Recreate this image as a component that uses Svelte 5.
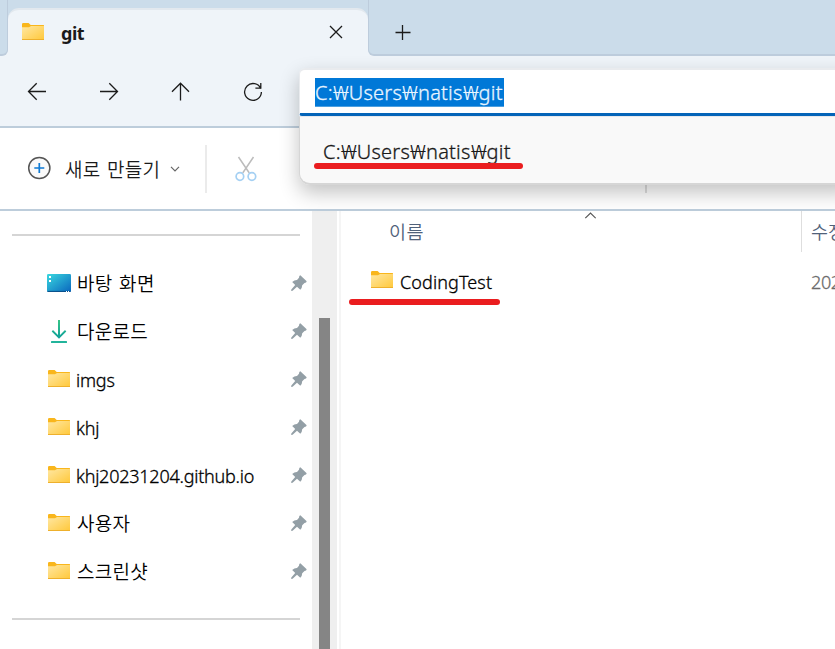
<script>
  const places = [
    { name: '바탕 화면', icon: 'desktop', ko: true },
    { name: '다운로드', icon: 'download', ko: true },
    { name: 'imgs', icon: 'folder' },
    { name: 'khj', icon: 'folder' },
    { name: 'khj20231204.github.io', icon: 'folder' },
    { name: '사용자', icon: 'folder', ko: true },
    { name: '스크린샷', icon: 'folder', ko: true },
  ];
  const segments = ['Users', 'natis', 'git'];
</script>

{#snippet folder()}
  <svg class="folder" width="24" height="20" viewBox="0 0 24 20">
    <defs>
      <linearGradient id="sheet" x1="0" y1="0" x2="1" y2="1">
        <stop offset="0" stop-color="#ffe7a2" />
        <stop offset="1" stop-color="#ffc83a" />
      </linearGradient>
    </defs>
    <path d="M1 2.2Q1 1 2.2 1H7.6L9.7 3H22.5Q23 3 23 3.6V8H1Z" fill="#f9b61c" />
    <path d="M1 5.2H8L10 4H23V17.4Q23 18 22.4 18H1.6Q1 18 1 17.4Z" fill="url(#sheet)" />
    <path d="M1 17.5H23" stroke="#eeb02c" />
  </svg>
{/snippet}

{#snippet path()}
  <span class="path">C:{#each segments as segment}<span class="won">₩</span>{segment}{/each}</span>
{/snippet}

<div class="window">
  <header class="titlebar">
    <div class="edge"></div>
    <div class="tab">
      {@render folder()}
      <span class="title">git</span>
      <svg class="close" width="14" height="14" viewBox="0 0 14 14"><path d="M1 1L13 13M13 1L1 13" /></svg>
    </div>
    <div class="strip">
      <svg width="16" height="16" viewBox="0 0 16 16"><path d="M.5 8.5H15.5M7.5 1V16" /></svg>
    </div>
  </header>

  <nav class="navbar">
    <svg width="20" height="20" viewBox="0 0 20 20"><path d="M19 9.5H1.5M9.7 1.3L1.5 9.5L9.7 17.7" /></svg>
    <svg width="20" height="20" viewBox="0 0 20 20"><path d="M1 9.5H18.5M10.3 1.3L18.5 9.5L10.3 17.7" /></svg>
    <svg width="20" height="20" viewBox="0 0 20 20"><path d="M10.5 18.5V1.5M2 9.7L10.5 1.2L19 9.7" /></svg>
    <svg class="refresh" width="20" height="20" viewBox="0 0 20 20"><path d="M17.8 6.8A8.4 8.4 0 1 0 18.4 10M17.8 1V6.2H12.4" /></svg>
    <div class="address">
      <div class="field"><span class="selected">{@render path()}</span></div>
      <div class="suggestions">
        {@render path()}
        <i class="marker"></i>
      </div>
    </div>
  </nav>

  <div class="toolbar">
    <svg class="plus" width="24" height="24" viewBox="0 0 24 24">
      <circle cx="12.3" cy="12" r="10.6" fill="#fafafa" stroke="#555" stroke-width="1.5" />
      <path d="M7.3 12H17.3M12.3 7V17" stroke="#0f7ad4" stroke-width="1.7" />
    </svg>
    <span class="new">새로 만들기</span>
    <svg class="down" width="10" height="6" viewBox="0 0 10 6"><path d="M1 .8L5 4.8L9 .8" /></svg>
    <div class="divider"></div>
    <svg class="scissors" width="24" height="26" viewBox="0 0 24 26">
      <path d="M4.5 1L15.3 17M19.5 1L8.7 17" stroke="#bcbcbc" stroke-width="1.5" />
      <g fill="#fff" stroke="#a5d0f3" stroke-width="1.7"><circle cx="5.9" cy="20.5" r="3.8" /><circle cx="17.9" cy="20.5" r="3.8" /></g>
    </svg>
    <div class="divider second"></div>
  </div>

  <div class="body">
    <aside>
      <hr />
      <ul>
        {#each places as place}
          <li>
            <span class="icon">
              {#if place.icon === 'folder'}
                {@render folder()}
              {:else if place.icon === 'desktop'}
                <svg width="24" height="18" viewBox="0 0 24 18">
                  <defs>
                    <linearGradient id="screen" x1="0" y1="0" x2="1" y2="1">
                      <stop offset="0" stop-color="#39d8df" /><stop offset="1" stop-color="#0a66be" />
                    </linearGradient>
                  </defs>
                  <rect width="24" height="18" rx="1.3" fill="url(#screen)" />
                  <path d="M.5 17.4H23.5" stroke="#084b86" />
                  <path d="M2 2h2v2h-2zM2 6h2v2h-2zM19 17h1v1h-1zM21 17h1v1h-1z" fill="#fff" />
                </svg>
              {:else}
                <svg width="18" height="24" viewBox="0 0 18 24">
                  <defs>
                    <linearGradient id="arrow" x1="0" y1="0" x2="0" y2="1">
                      <stop offset="0" stop-color="#38c586" /><stop offset="1" stop-color="#0c9f9b" />
                    </linearGradient>
                  </defs>
                  <path d="M8 1H10V16L15 11L16.3 12.5L9 19.8L1.7 12.5L3 11L8 16Z" fill="url(#arrow)" />
                  <rect x="1" y="22" width="16" height="2" rx=".5" fill="#22b49b" />
                </svg>
              {/if}
            </span>
            <span class="label" class:ko={place.ko}>{place.name}</span>
            <svg class="pin" width="16" height="16" viewBox="0 0 16 16">
              <path d="M9.3.3L15.7 6.3Q15.5 7.7 13.5 8L11.2 10.3Q11.2 13 9.3 14.8L6 11.8L1.6 15.7L.2 15.9L.3 14.4L4.2 10L1.2 7.1Q3.5 5 6 5.1L8 2.8Q8 .6 9.3.3Z" fill="#939fa6" />
            </svg>
          </li>
        {/each}
      </ul>
      <hr />
    </aside>
    <div class="scrollbar"><div class="thumb"></div></div>
    <div class="splitter"></div>
    <main>
      <div class="name-col">
        <svg class="sort" width="12" height="7" viewBox="0 0 12 7"><path d="M1.3 6.2L6.5 1L11.7 6.2" /></svg>
        <div class="heading">이름</div>
        <div class="file">
          {@render folder()}
          <span class="filename">CodingTest</span>
          <i class="marker"></i>
        </div>
      </div>
      <div class="date-col">
        <div class="date-heading">수정</div>
        <div class="date">202</div>
      </div>
    </main>
  </div>
</div>

<style>
  :global(body) { margin: 0; overflow: hidden; }
  .window {
    width: 835px; height: 649px; overflow: hidden; display: flex; flex-direction: column;
    background: #fff; color: #000; font: 350 18px/24px "Noto Sans", "Noto Sans CJK KR", sans-serif;
  }
  svg { display: block; flex: none; fill: none; }
  .window *, .window { box-sizing: border-box; }
  .titlebar { display: flex; height: 56px; flex: none; background: linear-gradient(#cbdcea 0 46px, #eff4f9 46px); }
  .edge, .strip { background: #cbdcea; }
  .edge { width: 8px; border-bottom: 2px solid #bdccdc; border-right: 1px solid #bdccdc; border-bottom-right-radius: 6px; }
  .tab {
    width: 360px; height: 48px; margin-top: 8px; display: flex; align-items: center;
    background: #eff4f9; border-top: 2px solid #e2e8ee; border-radius: 11px 11px 0 0; padding-left: 13px;
  }
  .tab .folder { margin-top: -2px; }
  .title { font-weight: 700; font-size: 18px; color: #1a1a1a; width: 268px; margin-left: 16px; letter-spacing: -.5px; }
  .close { margin-top: -3px; }
  .close, .strip svg, .navbar > svg { stroke: #1b1b1b; stroke-width: 1.3; }
  .strip { flex: 1; border-bottom: 2px solid #bdccdc; border-left: 1px solid #bdccdc; border-bottom-left-radius: 6px; padding: 24px 0 0 26px; }
  .navbar {
    height: 72px; flex: none; background: #eff4f9; border-bottom: 2px solid #bdcddb; display: flex;
    position: relative; padding: 26px 0 0 27px; gap: 52px;
  }
  .navbar > svg:nth-child(3) { margin-left: -1px; }
  .navbar > .refresh { margin-left: 1px; }
  .address {
    position: absolute; left: 299px; top: 12px; right: -20px; z-index: 2;
    border-radius: 6px 6px 11px 11px; box-shadow: 0 8px 20px rgba(0,0,0,.24);
  }
  .field {
    height: 48px; background: #fff; border: 2px solid #e9ebee; border-left-width: 1px; border-bottom: 3px solid #0464b8;
    border-radius: 6px 6px 3px 3px; padding: 8px 0 0 15px; display: flex;
  }
  .selected { width: 189px; height: 29px; border-bottom: 1px solid #4c9fdf; background: #0078d7; color: #e9f5ff; line-height: 30px; white-space: nowrap; }
  .path { font-size: 20px; letter-spacing: .22px; white-space: nowrap; }
  .path, .label:not(.ko), .filename, .date { -webkit-text-stroke: .3px currentColor; }
  .won { display: inline-block; width: 16px; text-align: center; transform: scaleX(1.25); -webkit-text-stroke-width: 0; }
  .suggestions {
    height: 69px; background: #f9f9f9; border: 2px solid #d6d6d6; border-left-width: 1px; border-top: 1px solid #e7e8ec;
    border-radius: 0 0 11px 11px; padding: 20px 0 0 23px; line-height: 30px; color: #1a1a1a; position: relative;
  }
  .marker { position: absolute; height: 6px; border-radius: 3px; background: #ea1d1f; }
  .suggestions .marker { left: 14px; top: 46px; width: 209px; }
  .toolbar { height: 83px; flex: none; border-bottom: 2px solid #bdcddb; display: flex; align-items: center; padding-left: 27px; }
  .plus { margin-top: -1px; }
  .new { width: 99px; margin: 0 6px 0 14px; font-family: "Noto Sans CJK KR", sans-serif; font-size: 19px; letter-spacing: .25px; word-spacing: 2px; color: #1a1a1a; white-space: nowrap; }
  .down { stroke: #666; stroke-width: 1.2; }
  .divider { width: 2px; height: 48px; background: #ebebeb; margin-left: 25px; }
  .scissors { margin: 1px 0 0 27px; }
  .divider.second { margin-left: 387px; background: #dedede; }
  .body { flex: 1; display: flex; min-height: 0; }
  aside { width: 312px; padding-top: 23px; flex: none; }
  hr { margin: 0 12px; border: 0; height: 2px; background: #d5d5d5; }
  ul { list-style: none; margin: 0; padding: 23px 5px 23px 47px; height: 382px; }
  li { height: 48px; display: flex; align-items: center; }
  .icon { width: 24px; display: flex; justify-content: center; }
  .label { flex: 1; margin-left: 5px; margin-top: 2px; white-space: nowrap; letter-spacing: -.23px; }
  .ko { font-family: "Noto Sans CJK KR", sans-serif; font-size: 19px; margin: -1px 0 0 6px; letter-spacing: .3px; word-spacing: 2px; }
  .scrollbar { width: 25px; background: #efefef; padding: 107px 7px 0; }
  .thumb { height: 100%; background: #858585; }
  .splitter { width: 2px; margin-left: 2px; background: #f5f5f5; }
  main { flex: 1; display: flex; min-width: 0; overflow: hidden; }
  .name-col { width: 460px; flex: none; }
  .sort { stroke: #555; stroke-width: 1.2; margin: 1px 0 0 243px; }
  .heading, .date-heading { font-family: "Noto Sans CJK KR", sans-serif; font-size: 18.5px; color: #50617a; white-space: nowrap; }
  .heading { margin: 0 0 0 48px; letter-spacing: .4px; }
  .file { position: relative; display: flex; margin-top: 27px; height: 46px; padding-left: 29px; }
  .filename { margin-left: 6px; letter-spacing: .1px; }
  .file .marker { left: 8px; top: 29px; width: 151px; }
  .date-col { flex: none; width: 100px; }
  .date-heading { height: 41px; border-left: 1px solid #dedede; padding: 8px 0 0 9px; }
  .date { margin: 18px 0 0 10px; color: #6b6b6b; letter-spacing: -.4px; }
</style>
